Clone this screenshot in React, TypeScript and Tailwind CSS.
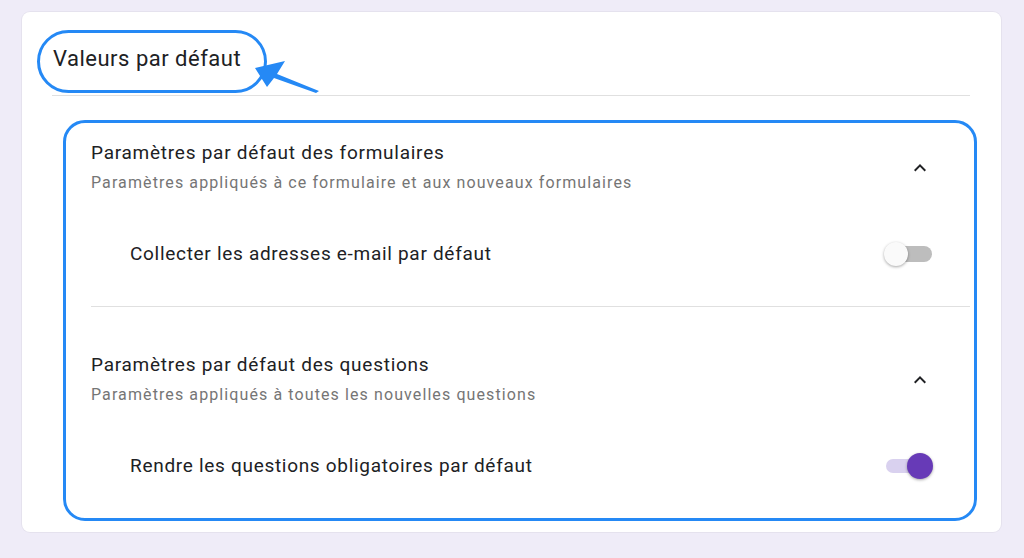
import React from "react"

const font = { fontFamily: "Roboto, 'Noto Sans', sans-serif" }

function Chevron() {
  return (
    <svg width="24" height="24" viewBox="0 0 24 24" className="text-[#202124]">
      <path d="M7.4 15.4 12 10.8l4.6 4.6L18 14l-6-6-6 6z" fill="currentColor" />
    </svg>
  )
}

function Toggle({ on }: { on: boolean }) {
  return (
    <div className="relative w-[48px] h-[24px] flex items-center">
      <div
        className={
          on
            ? "ml-[2px] w-[36px] h-[14px] rounded-full bg-[#d9d1ef]"
            : "ml-[3px] w-[45px] h-[16px] rounded-full bg-[#bdbdbd]"
        }
      />
      <div
        className={
          on
            ? "absolute left-[23px] top-[-1px] w-[26px] h-[26px] rounded-full bg-[#673ab7] shadow-[0_1px_3px_rgba(0,0,0,0.35)]"
            : "absolute left-0 top-0 w-[24px] h-[24px] rounded-full bg-[#fafafa] shadow-[0_1px_3px_rgba(0,0,0,0.35)]"
        }
      />
    </div>
  )
}

function Section({
  title,
  subtitle,
  label,
  on,
}: {
  title: string
  subtitle: string
  label: string
  on: boolean
}) {
  return (
    <div className="pl-[25px]">
      <div className="flex items-center pr-[42px]">
        <div className="flex-1">
          <div className="text-[19px] leading-[24px] tracking-[0.75px] text-[#202124]">{title}</div>
          <div className="mt-[7px] text-[16px] leading-[22px] tracking-[1.1px] text-[#757575]">{subtitle}</div>
        </div>
        <Chevron />
      </div>
      <div className="flex items-center h-[48px] mt-[36px] pl-[39px] pr-[42px]">
        <div className="flex-1 text-[19px] tracking-[0.7px] text-[#202124]">{label}</div>
        <Toggle on={on} />
      </div>
    </div>
  )
}

export default function App() {
  return (
    <div className="min-h-[558px] bg-[#efecf8] pt-[12px] pb-[26px]" style={font}>
      <div className="relative ml-[22px] w-[979px] bg-white rounded-[8px] shadow-[0_0_0_1px_rgba(0,0,0,0.04)] pb-[11px]">
        <div className="pt-[33px] pb-[22px] pl-[31px]">
          <h1 className="text-[22px] leading-[28px] tracking-[0.5px] text-[#202124]">Valeurs par défaut</h1>
        </div>
        <div className="ml-[30px] mr-[31px] h-px bg-[#e0e0e0]" />

        <div className="mt-[24px] ml-[41px] mr-[24px] border-[3px] border-[#2589f5] rounded-[22px] pt-[18px] pb-[28px]">
          <Section
            title="Paramètres par défaut des formulaires"
            subtitle="Paramètres appliqués à ce formulaire et aux nouveaux formulaires"
            label="Collecter les adresses e-mail par défaut"
            on={false}
          />
          <div className="ml-[25px] mr-[4px] mt-[28px] mb-[46px] h-px bg-[#e0e0e0]" />
          <Section
            title="Paramètres par défaut des questions"
            subtitle="Paramètres appliqués à toutes les nouvelles questions"
            label="Rendre les questions obligatoires par défaut"
            on={true}
          />
        </div>

        <svg
          className="absolute left-0 top-0 pointer-events-none"
          width="320"
          height="100"
          viewBox="0 0 320 100"
        >
          <rect x="16.5" y="19.5" width="227" height="60" rx="30" fill="none" stroke="#2589f5" strokeWidth="3" />
          <path d="M233 56 L263 49 L255 62 L297 79 L294 81 L252 66 L245 75 Z" fill="#2589f5" />
        </svg>
      </div>
    </div>
  )
}
